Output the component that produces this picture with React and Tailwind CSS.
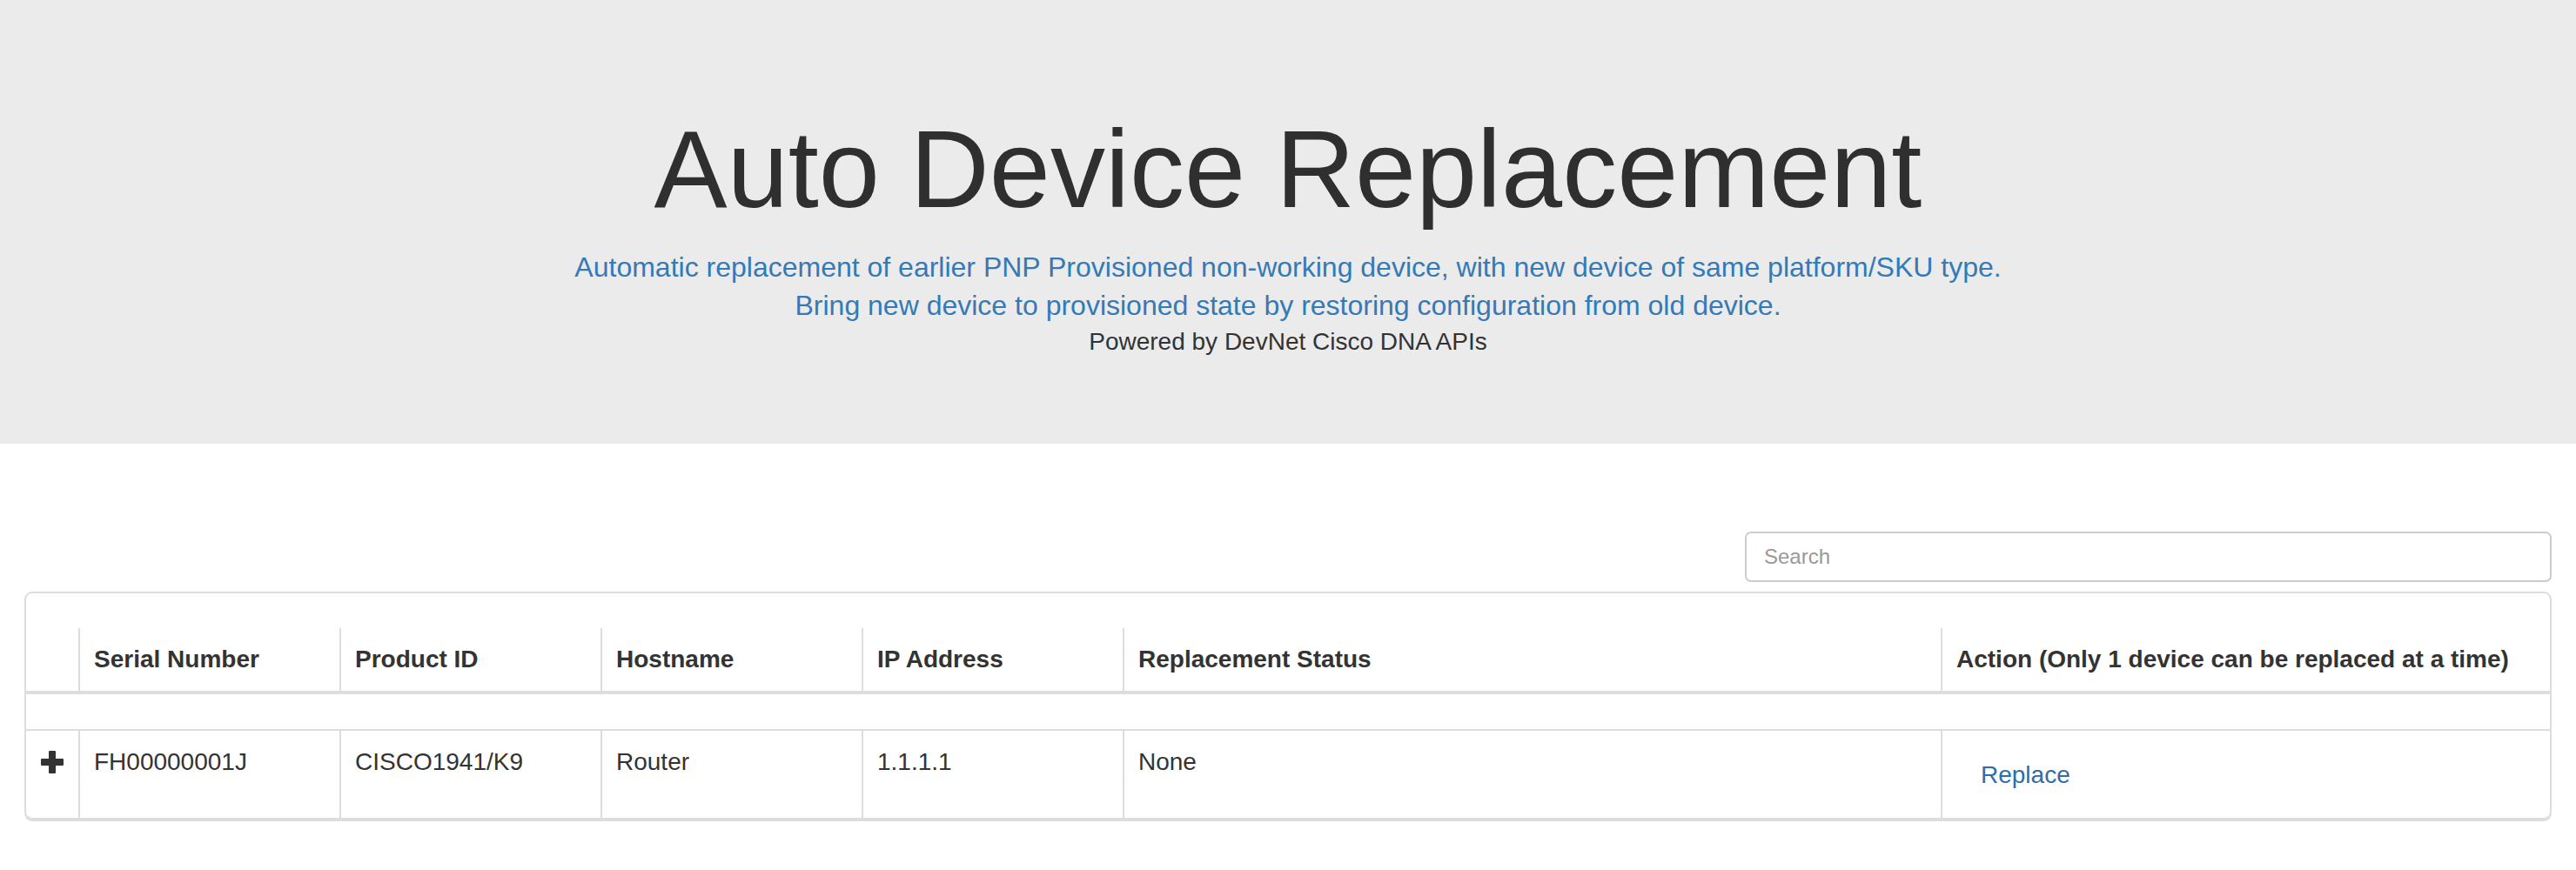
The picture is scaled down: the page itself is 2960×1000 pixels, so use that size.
const columns = [
  { key: "expand", label: "" },
  { key: "serial", label: "Serial Number" },
  { key: "pid", label: "Product ID" },
  { key: "hostname", label: "Hostname" },
  { key: "ip", label: "IP Address" },
  { key: "status", label: "Replacement Status" },
  { key: "action", label: "Action (Only 1 device can be replaced at a time)" },
];

const devices = [
  {
    serial: "FH00000001J",
    pid: "CISCO1941/K9",
    hostname: "Router",
    ip: "1.1.1.1",
    status: "None",
  },
];

const gridCols = "grid grid-cols-[60px_300px_300px_300px_300px_940px_1fr]";

const PlusIcon = () => (
  <svg width="26" height="26" viewBox="0 0 26 26" className="block">
    <rect x="9" y="0" width="8" height="26" rx="1" fill="#333333" />
    <rect x="0" y="9" width="26" height="8" rx="1" fill="#333333" />
  </svg>
);

const Header = () => (
  <div className="bg-[#ebebeb] pt-[126px] pb-[97px] text-center">
    <h1 className="text-[126px] leading-[1.1] text-[#2f2f2f] mb-[20px]">
      Auto Device Replacement
    </h1>
    <p className="text-[32px] leading-[44px] text-[#337ab7]">
      Automatic replacement of earlier PNP Provisioned non-working device, with
      new device of same platform/SKU type.
    </p>
    <p className="text-[32px] leading-[44px] text-[#337ab7]">
      Bring new device to provisioned state by restoring configuration from old
      device.
    </p>
    <p className="text-[28px] leading-[40px] text-[#333]">
      Powered by DevNet Cisco DNA APIs
    </p>
  </div>
);

const DeviceRow = ({ device }) => (
  <div className={`${gridCols} text-[28px] leading-[40px] text-[#333]`}>
    <div className="flex items-start justify-center py-[16px]">
      <div className="h-[40px] flex items-center pt-[1px]">
        <PlusIcon />
      </div>
    </div>
    <div className="border-l-2 border-[#ddd] p-[16px]">{device.serial}</div>
    <div className="border-l-2 border-[#ddd] p-[16px]">{device.pid}</div>
    <div className="border-l-2 border-[#ddd] p-[16px]">{device.hostname}</div>
    <div className="border-l-2 border-[#ddd] p-[16px]">{device.ip}</div>
    <div className="border-l-2 border-[#ddd] p-[16px]">{device.status}</div>
    <div className="border-l-2 border-[#ddd] p-[16px]">
      <button className="border-2 border-transparent px-[26px] pt-[13px] pb-[11px] text-[28px] leading-[40px] text-[#2f6ca8]">
        Replace
      </button>
    </div>
  </div>
);

export default function App() {
  return (
    <div className="min-h-screen bg-white font-['Liberation_Sans',Arial,sans-serif]">
      <Header />
      <div className="px-[28px] pt-[101px] pb-[40px]">
        <div className="flex justify-end">
          <input
            type="text"
            placeholder="Search"
            className="w-[927px] h-[58px] border-2 border-[#ccc] rounded-[7px] px-[20px] text-[24px] text-[#555] placeholder:text-[#999] outline-none"
          />
        </div>
        <div className="mt-[11px] border-2 border-[#ddd] rounded-[9px] shadow-[0_2px_0_#dcdcdc] overflow-hidden">
          <div className="h-[40px]" />
          <div className={`${gridCols} border-b-4 border-[#ddd] text-[28px] leading-[40px] font-bold text-[#333]`}>
            {columns.map((col, i) => (
              <div
                key={col.key}
                className={i === 0 ? "p-[16px]" : "border-l-2 border-[#ddd] p-[16px] whitespace-nowrap"}
              >
                {col.label}
              </div>
            ))}
          </div>
          <div className="h-[42px] border-b-2 border-[#ddd]" />
          {devices.map((d) => (
            <DeviceRow key={d.serial} device={d} />
          ))}
        </div>
      </div>
    </div>
  );
}
